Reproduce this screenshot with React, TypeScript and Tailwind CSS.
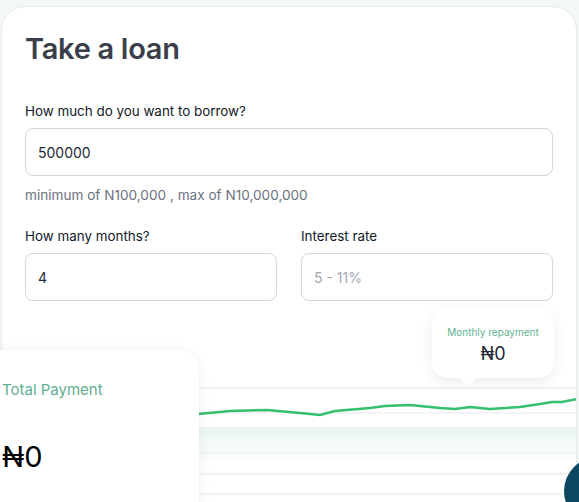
import React from "react";

const line: [number, number][] = [
  [-2, 44], [196, 42], [228, 39], [265, 38], [298, 41], [318, 43], [333, 39], [368, 36],
  [383, 34], [408, 33], [438, 36], [453, 37], [468, 35], [488, 37], [518, 35], [538, 32],
  [550, 30], [560, 30], [575, 27],
];

const gridRows = [16, 41, 60, 81, 102, 122];

const Field = ({ label, value, placeholder }: { label: string; value?: string; placeholder?: string }) => (
  <div className="flex flex-col flex-1">
    <label className="text-[13.4px] leading-5 text-[#111827]">{label}</label>
    <input
      readOnly
      value={value ?? ""}
      placeholder={placeholder}
      className="mt-[7px] h-12 rounded-lg border border-[#d4d7de] px-3 text-[14px] text-[#1f2937] placeholder:text-[#a3a8b3] outline-none"
    />
  </div>
);

const LoanChart = () => {
  const d = line.map(([x, y], i) => `${i ? "L" : "M"}${x} ${y}`).join(" ");
  return (
    <svg width="574" height="130" viewBox="0 0 574 130" className="block">
      <defs>
        <linearGradient id="band" x1="0" y1="0" x2="0" y2="1">
          <stop offset="0" stopColor="#e9f7ef" />
          <stop offset="1" stopColor="#f8fcfa" stopOpacity="0.5" />
        </linearGradient>
      </defs>
      <rect x="0" y="55" width="574" height="33" fill="url(#band)" />
      {gridRows.map((y) => (
        <line key={y} x1="0" x2="574" y1={y} y2={y} stroke="#f0f1f3" strokeWidth="1.5" />
      ))}
      <path d={d} fill="none" stroke="#35c06d" strokeWidth="2.5" strokeLinejoin="round" />
    </svg>
  );
};

export default function App() {
  return (
    <div className="relative h-[502px] overflow-hidden bg-[#f3f7f6] pl-px pr-[2px] pt-[6px] font-['Inter',sans-serif]">
      <div className="relative h-[520px] rounded-t-[24px] border border-[#e6eaea] bg-white">
        <div className="px-[23px]">
          <h1 className="pt-[24px] text-[29px] font-semibold leading-9 tracking-[-0.3px] text-[#3b3f4b]">Take a loan</h1>
          <div className="mt-[34px]">
            <Field label="How much do you want to borrow?" value="500000" />
          </div>
          <p className="mt-[9px] text-[13.6px] leading-5 text-[#6b7280]">minimum of N100,000 , max of N10,000,000</p>
          <div className="mt-[21px] flex gap-6">
            <Field label="How many months?" value="4" />
            <Field label="Interest rate" placeholder="5 - 11%" />
          </div>
        </div>

        <div className="relative mt-[71px]">
          <LoanChart />
          <div className="absolute left-[430px] top-[-65px] flex h-[71px] w-[122px] flex-col items-center rounded-[16px] bg-white pt-[17px] shadow-[0_4px_14px_rgba(0,0,0,0.08)]">
            <span className="text-[10px] leading-4 text-[#5fb390]">Monthly repayment</span>
            <span className="mt-[2px] text-[18px] leading-6 text-[#1f2937]">₦0</span>
            <span className="absolute bottom-[-8px] left-[28px] h-0 w-0 border-x-[8px] border-t-[8px] border-x-transparent border-t-white" />
          </div>
        </div>
      </div>

      <div className="absolute left-[-24px] top-[350px] h-[180px] w-[223px] rounded-[20px] bg-white pl-[26px] pt-[30px] shadow-[0_2px_14px_rgba(0,0,0,0.07)]">
        <p className="text-[15px] leading-5 text-[#5fae8f]">Total Payment</p>
        <p className="mt-[39px] text-[29px] leading-9 text-black">₦0</p>
      </div>

      <div className="absolute left-[564px] top-[457px] h-[68px] w-[68px] rounded-full bg-[#0d4862]" />
    </div>
  );
}
